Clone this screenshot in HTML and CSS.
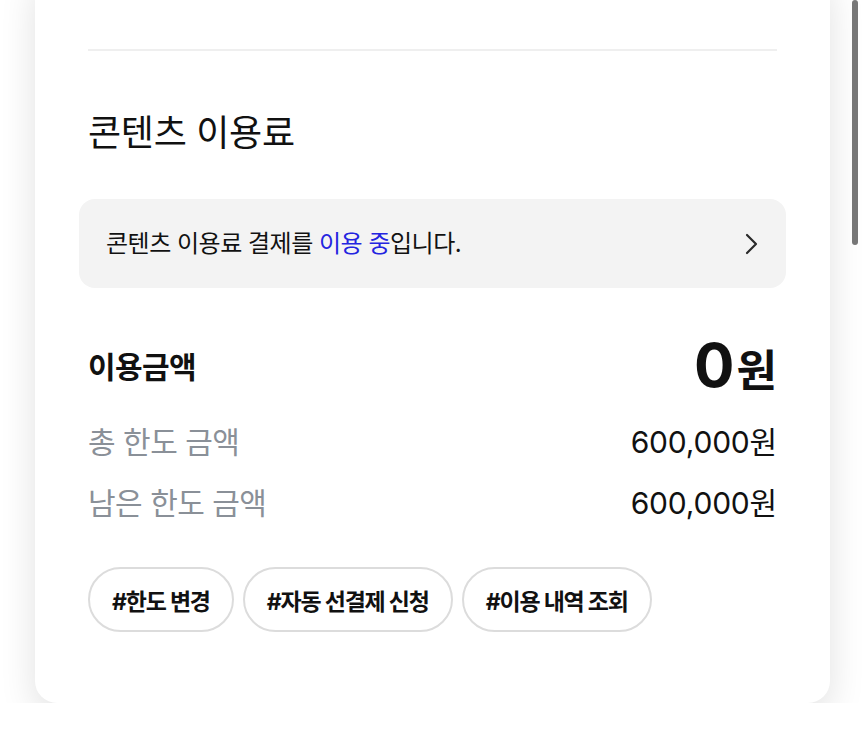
FILE: index.html
```html
<!doctype html>
<html lang="ko">

<head>
  <meta charset="UTF-8" />
  <meta name="viewport" content="width=device-width, initial-scale=1.0">
  <title>콘텐츠 이용료</title>
  <link rel="stylesheet" href="styles.css">
</head>

<body>
  <div class="card">
    <div class="divider"></div>

    <h2 class="section-title">콘텐츠 이용료</h2>

    <div class="notice">
      <p>콘텐츠 이용료 결제를 <span class="highlight">이용 중</span>입니다.</p>
      <svg class="chevron" width="16" height="24" viewBox="0 0 16 24">
        <path d="M3 3 L12 12 L3 21" fill="none" stroke="#2a2a2a" stroke-width="2.2" stroke-linecap="round" stroke-linejoin="round" />
      </svg>
    </div>

    <div class="usage">
      <span class="usage-label">이용금액</span>
      <span class="usage-amount"><span class="big-num">0</span>원</span>
    </div>

    <div class="limits">
      <div class="limit-row">
        <span class="limit-label">총 한도 금액</span>
        <span class="limit-value">600,000원</span>
      </div>
      <div class="limit-row">
        <span class="limit-label">남은 한도 금액</span>
        <span class="limit-value">600,000원</span>
      </div>
    </div>

    <div class="tags">
      <button class="tag">#한도 변경</button>
      <button class="tag">#자동 선결제 신청</button>
      <button class="tag">#이용 내역 조회</button>
    </div>
  </div>

  <div class="scrollbar"></div>
</body>

</html>
```

FILE: styles.css
```css
body {
  margin: 0;
  padding: 0;
  background-color: #ffffff;
  font-family: Inter, "Noto Sans CJK KR", sans-serif;
  color: #111111;
  overflow: hidden;
}

.card {
  margin: -30px 35px 0 35px;
  padding: 79px 53px 71px 53px;
  background-color: #ffffff;
  border-radius: 22px;
  box-shadow: 0 12px 36px rgba(0, 0, 0, 0.12);
}

.divider {
  height: 2px;
  background-color: #efefef;
}

.section-title {
  margin: 60px 0 44px 0;
  font-size: 36px;
  font-weight: 400;
  letter-spacing: -0.3px;
  line-height: 44px;
}

.notice {
  display: flex;
  align-items: center;
  justify-content: space-between;
  margin: 0 -9px;
  height: 89px;
  padding: 0 27px;
  background-color: #f3f3f3;
  border-radius: 16px;
}

.notice p {
  margin: 0;
  font-size: 24px;
  letter-spacing: -0.5px;
  line-height: 30px;
}

.highlight {
  color: #2424e0;
}

.chevron {
  margin-right: -1px;
}

.usage {
  display: flex;
  align-items: center;
  justify-content: space-between;
  margin-top: 44px;
  height: 66px;
}

.usage-label {
  font-size: 30px;
  font-weight: 700;
  letter-spacing: -0.6px;
}

.usage-amount {
  font-size: 44px;
  font-weight: 700;
}

.big-num {
  font-size: 60px;
  margin-right: 2px;
}

.limits {
  margin-top: 11px;
}

.limit-row {
  display: flex;
  align-items: center;
  justify-content: space-between;
  height: 61px;
}

.limit-label {
  font-size: 30px;
  color: #8a9098;
  letter-spacing: -0.5px;
}

.limit-value {
  font-size: 30px;
  letter-spacing: -0.2px;
}

.tags {
  display: flex;
  gap: 9px;
  margin-top: 36px;
}

.tag {
  height: 65px;
  padding: 0 22px;
  background-color: #ffffff;
  border: 2px solid #dcdcdc;
  border-radius: 33px;
  font-family: inherit;
  font-size: 23px;
  font-weight: 700;
  letter-spacing: -1.2px;
  color: #111111;
}

.scrollbar {
  position: fixed;
  top: 0;
  right: 7px;
  width: 6px;
  height: 245px;
  background-color: #777777;
  border-radius: 3px;
}
```
